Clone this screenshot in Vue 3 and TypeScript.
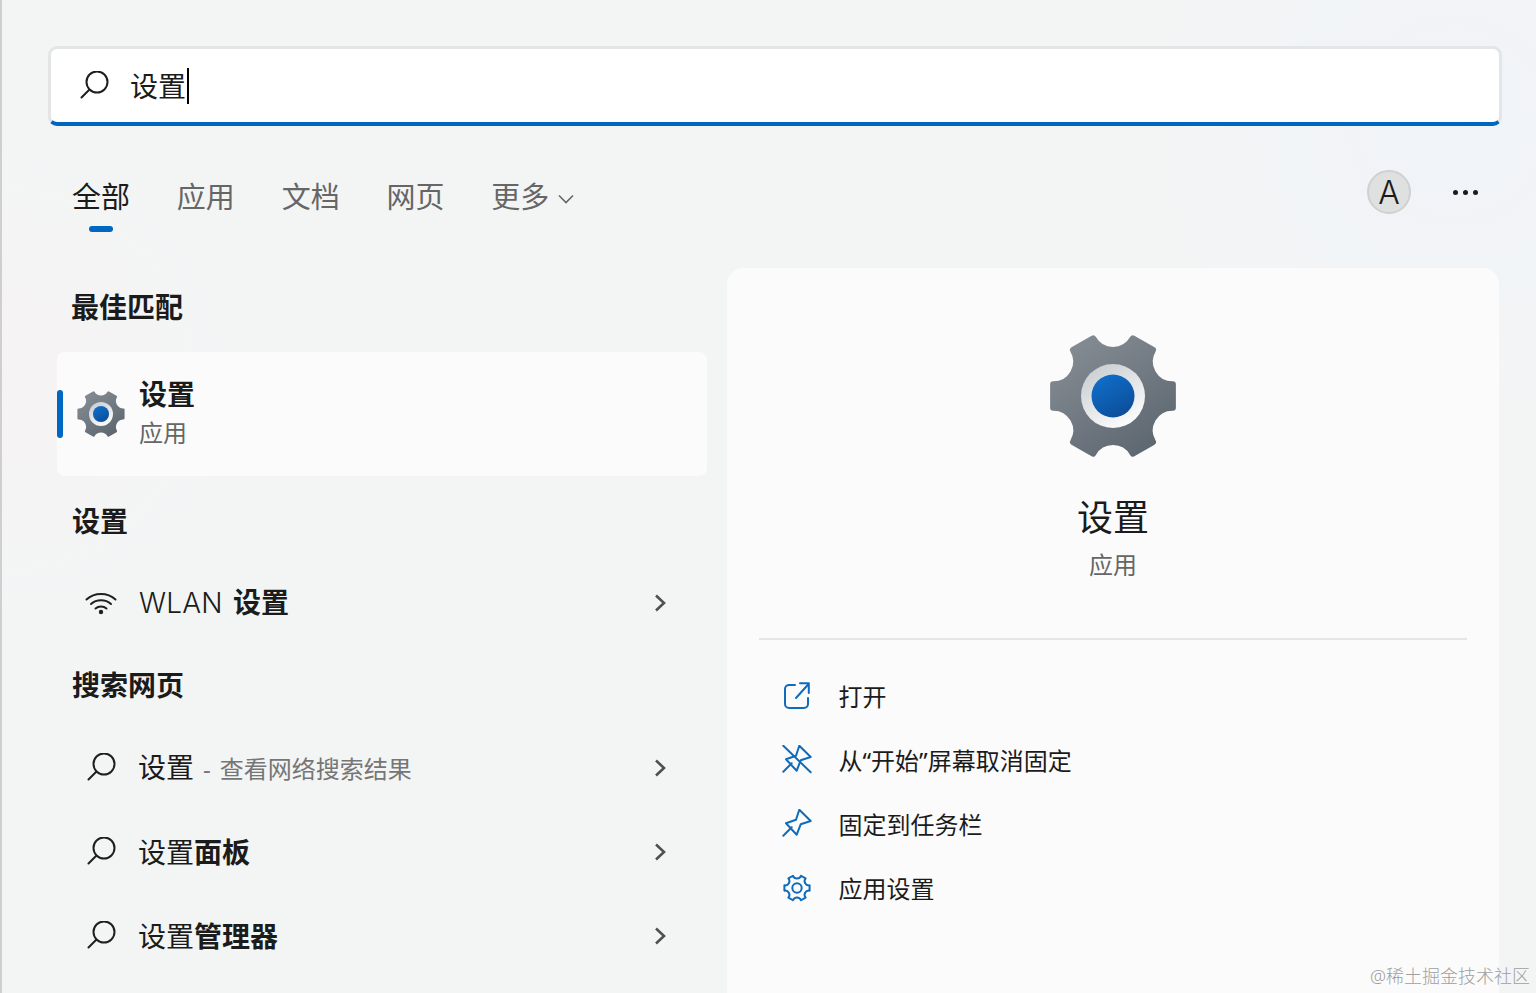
<template>
  <div class="page">
    <div class="search-box">
      <svg class="icon-search" viewBox="0 0 30 30"><path :d="searchPath" /></svg>
      <span class="search-text">设置</span>
      <span class="caret"></span>
    </div>

    <div class="toolbar">
      <div class="tabs">
        <div v-for="(t, i) in tabs" :key="t" class="tab" :class="{ active: i === 0 }">
          {{ t }}
          <svg v-if="t === '更多'" class="tab-chevron" viewBox="0 0 16 10"><path d="M1 1.5 8 8.5 15 1.5" /></svg>
        </div>
      </div>
      <div class="toolbar-right">
        <div class="avatar">A</div>
        <div class="dots"><i></i><i></i><i></i></div>
      </div>
    </div>

    <div class="content">
      <div class="left">
        <h4 class="group first">最佳匹配</h4>
        <div class="best">
          <span class="best-bar"></span>
          <svg class="gear-small" viewBox="0 0 128 128">
            <defs>
              <linearGradient id="gearBody" x1="0.15" y1="0" x2="0.85" y2="1">
                <stop offset="0" stop-color="#858c94" />
                <stop offset="1" stop-color="#5c666f" />
              </linearGradient>
              <linearGradient id="gearRing" x1="0.2" y1="0" x2="0.8" y2="1">
                <stop offset="0" stop-color="#c9cdd1" />
                <stop offset="1" stop-color="#ffffff" />
              </linearGradient>
              <linearGradient id="gearCore" x1="0.2" y1="0" x2="0.8" y2="1">
                <stop offset="0" stop-color="#0f6fca" />
                <stop offset="1" stop-color="#0c4c97" />
              </linearGradient>
            </defs>
            <path :d="gearPath" fill="url(#gearBody)" stroke="url(#gearBody)" stroke-width="6" stroke-linejoin="round" />
            <circle cx="64" cy="64" r="32" fill="url(#gearRing)" />
            <circle cx="64" cy="64" r="21.5" fill="url(#gearCore)" />
          </svg>
          <div class="best-text">
            <div class="best-title">设置</div>
            <div class="best-sub">应用</div>
          </div>
        </div>

        <h4 class="group second">设置</h4>
        <div class="row">
          <svg class="icon-wifi" viewBox="0 0 32 24">
            <path d="M1.5 8.5C9.5 1 22.5 1 30.5 8.5" />
            <path d="M6 13C11.5 8 20.5 8 26 13" />
            <path d="M10.5 17.5C13.5 14.8 18.5 14.8 21.5 17.5" />
            <circle cx="16" cy="21" r="2.2" />
          </svg>
          <span class="row-text"><span class="latin">WLAN</span> <b>设置</b></span>
          <svg class="chevron" viewBox="0 0 14 20"><path d="M3 2.5 11 10 3 17.5" /></svg>
        </div>

        <h4 class="group third">搜索网页</h4>
        <div v-for="r in webRows" :key="r.bold + r.hint" class="row">
          <svg class="icon-search row-search" viewBox="0 0 30 30"><path :d="searchPath" /></svg>
          <span class="row-text">设置<b v-if="r.bold">{{ r.bold }}</b><span v-if="r.hint" class="hint"><span class="dash">-</span>{{ r.hint }}</span></span>
          <svg class="chevron" viewBox="0 0 14 20"><path d="M3 2.5 11 10 3 17.5" /></svg>
        </div>
      </div>

      <div class="panel">
        <svg class="gear-large" viewBox="0 0 128 128">
          <path :d="gearPath" fill="url(#gearBody)" stroke="url(#gearBody)" stroke-width="6" stroke-linejoin="round" />
          <circle cx="64" cy="64" r="32" fill="url(#gearRing)" />
          <circle cx="64" cy="64" r="21.5" fill="url(#gearCore)" />
        </svg>
        <div class="panel-title">设置</div>
        <div class="panel-sub">应用</div>
        <div class="divider"></div>
        <div class="actions">
          <div class="action">
            <svg viewBox="0 0 30 30">
              <path d="M13 4H7a4 4 0 0 0-4 4v15a4 4 0 0 0 4 4h15a4 4 0 0 0 4-4v-6" />
              <path d="M14 17 26.600 3M18 2.300H26.800V12" />
            </svg>
            <span>打开</span>
          </div>
          <div class="action">
            <svg viewBox="0 0 30 30">
              <path :d="pinPath" />
              <path d="M1.300 .7 28.700 27.300" />
            </svg>
            <span>从“开始”屏幕取消固定</span>
          </div>
          <div class="action">
            <svg viewBox="0 0 30 30"><path :d="pinPath" /></svg>
            <span>固定到任务栏</span>
          </div>
          <div class="action">
            <svg viewBox="0 0 128 128" class="cog">
              <path :d="cogPath" stroke-linejoin="round" />
              <circle cx="64" cy="64" r="20" />
            </svg>
            <span>应用设置</span>
          </div>
        </div>
      </div>
    </div>

    <div class="watermark">@稀土掘金技术社区</div>
  </div>
</template>

<script setup lang="ts">
const tabs = ['全部', '应用', '文档', '网页', '更多']

const webRows = [
  { bold: '', hint: '查看网络搜索结果' },
  { bold: '面板', hint: '' },
  { bold: '管理器', hint: '' },
]

const searchPath = 'M27.500 11A10.500 10.500 0 1 1 6.500 11A10.500 10.500 0 1 1 27.500 11M9.500 18.500 1.500 26.500'
const pinPath = 'M4 14.300 14 10.700 17.300 .7 28.700 12 18.700 15.300 14.700 25.700ZM1.300 26.700 9.700 18.300'

// six teeth with a concave scoop between each pair
const makeGear = (R: number, scoop: number, spread: number) => {
  const pt = (deg: number) => {
    const a = (deg * Math.PI) / 180
    return `${(64 + R * Math.cos(a)).toFixed(2)} ${(64 + R * Math.sin(a)).toFixed(2)}`
  }
  let d = `M${pt(-spread)}`
  for (let i = 0; i < 6; i++) {
    const c = i * 60
    d += ` L${pt(c + spread)} A${scoop} ${scoop} 0 0 0 ${pt(c + 60 - spread)}`
  }
  return d + ' Z'
}

const gearPath = makeGear(61, 22.800, 11)
const cogPath = makeGear(55, 18, 12)
</script>

<style scoped>
.page {
  position: relative;
  width: 1536px;
  height: 993px;
  overflow: hidden;
  box-sizing: border-box;
  padding-top: 46px;
  font-family: "Noto Sans", "Noto Sans CJK SC", sans-serif;
  color: #1b1b1b;
  border-left: 2px solid #cfcfd0;
  background:
    radial-gradient(circle at 1450px 120px, #f0f3f8 0, rgba(240, 243, 248, 0) 300px),
    radial-gradient(circle at 0 380px, #f6f3f4 0, rgba(246, 243, 244, 0) 240px),
    #f3f5f5;
}

.search-box {
  display: flex;
  align-items: center;
  box-sizing: border-box;
  width: 1454px;
  height: 80px;
  margin-left: 46px;
  padding: 0 0 0 29px;
  background: #fff;
  border: 3px solid #e3e5e7;
  border-bottom: 4px solid #0067c0;
  border-radius: 9px;
}
.icon-search { width: 30px; height: 30px; flex: none; }
.icon-search path { fill: none; stroke: #1f1f1f; stroke-width: 2; stroke-linecap: round; }
.search-text { margin: 0 1px 0 20px; font-size: 28px; line-height: 36px; }
.caret { width: 2px; height: 36px; background: #000; }

.toolbar {
  display: flex;
  justify-content: space-between;
  align-items: flex-start;
  height: 142px;
  padding-left: 70px;
}
.tabs { display: flex; gap: 46.800px; padding-top: 50px; }
.tab {
  position: relative;
  display: flex;
  align-items: center;
  font-size: 29px;
  line-height: 42px;
  color: #666;
  white-space: nowrap;
}
.tab.active { color: #1b1b1b; }
.tab.active::after {
  content: "";
  position: absolute;
  left: 17px;
  bottom: -14px;
  width: 24px;
  height: 6px;
  border-radius: 3px;
  background: #0067c0;
}
.tab-chevron { width: 16px; height: 10px; margin-left: 9px; margin-top: 4px; }
.tab-chevron path { fill: none; stroke: #666; stroke-width: 1.6; }

.toolbar-right { display: flex; align-items: center; gap: 42px; padding: 44px 58px 0 0; }
.avatar {
  box-sizing: border-box;
  width: 44px;
  height: 44px;
  border-radius: 50%;
  border: 2px solid #cfd0d0;
  background: #dfe0e0;
  display: flex;
  align-items: center;
  justify-content: center;
  font-family: "Inter", sans-serif;
  font-weight: 300;
  font-size: 32px;
  color: #1b1b1b;
}
.dots { display: flex; gap: 5px; }
.dots i { width: 5px; height: 5px; border-radius: 50%; background: #1b1b1b; }

.content { display: flex; align-items: flex-start; padding-left: 55px; }
.left { width: 650px; flex: none; margin-right: 20px; }
.group {
  margin: 0 0 0 15px;
  font-size: 28px;
  line-height: 40px;
  font-weight: 700;
  color: #1b1b1b;
}
.group.first { margin: 19px 0 25px 14px; }
.group.second { margin-top: 25px; margin-bottom: 20px; }
.group.third { margin-top: 20px; margin-bottom: 21px; }

.best {
  position: relative;
  display: flex;
  align-items: center;
  height: 124px;
  background: #fbfbfb;
  border-radius: 8px;
  padding-left: 20px;
}
.best-bar {
  position: absolute;
  left: 0;
  top: 38px;
  width: 6px;
  height: 48px;
  border-radius: 3px;
  background: #0067c0;
}
.gear-small { width: 48px; height: 48px; flex: none; }
.best-text { margin-left: 14px; margin-top: -2px; }
.best-title { font-size: 28px; line-height: 40px; font-weight: 700; }
.best-sub { font-size: 24px; line-height: 38px; color: #666; }

.row {
  display: flex;
  align-items: center;
  height: 84px;
  padding-left: 28px;
}
.icon-wifi { width: 32px; height: 24px; flex: none; margin-right: 22px; }
.icon-wifi path { fill: none; stroke: #1f1f1f; stroke-width: 2; stroke-linecap: round; }
.icon-wifi circle { fill: #1f1f1f; }
.row-search { margin-right: 21px; margin-left: 2px; }
.row-text { flex: 1; margin-top: -1px; font-size: 28px; line-height: 40px; white-space: nowrap; }
.row-text b { font-weight: 700; }
.latin { margin-right: 3px; font-family: "Inter", sans-serif; font-weight: 300; letter-spacing: .2px; }
.hint { font-size: 24px; color: #767676; }
.dash { margin: 0 9px; }
.chevron { width: 14px; height: 20px; flex: none; margin-right: 40px; }
.chevron path { fill: none; stroke: #505050; stroke-width: 2.6; }

.panel {
  flex: none;
  width: 772px;
  height: 760px;
  box-sizing: border-box;
  padding: 64px 32px 0;
  background: #fbfbfb;
  border-radius: 16px;
  display: flex;
  flex-direction: column;
  align-items: center;
}
.gear-large { width: 128px; height: 128px; flex: none; }
.panel-title { margin-top: 32px; font-size: 36px; line-height: 52px; }
.panel-sub { margin-top: 4px; font-size: 24px; line-height: 34px; color: #666; }
.divider { align-self: stretch; height: 2px; margin-top: 56px; background: #e5e5e5; }
.actions { align-self: stretch; margin-top: 23px; }
.action {
  display: flex;
  align-items: center;
  height: 64px;
  padding-left: 23px;
  font-size: 24px;
  color: #1b1b1b;
}
.action svg { width: 30px; height: 30px; flex: none; margin-right: 26.500px; margin-top: 2px; }
.action svg path { fill: none; stroke: #0f6cbd; stroke-width: 2; stroke-linecap: round; stroke-linejoin: round; }
.action svg.cog path, .action svg.cog circle { fill: none; stroke: #0f6cbd; stroke-width: 8.500; }

.watermark {
  position: absolute;
  right: 6px;
  bottom: 5px;
  font-size: 18px;
  line-height: 24px;
  font-weight: 300;
  color: #9f9f9f;
  white-space: nowrap;
}
</style>
